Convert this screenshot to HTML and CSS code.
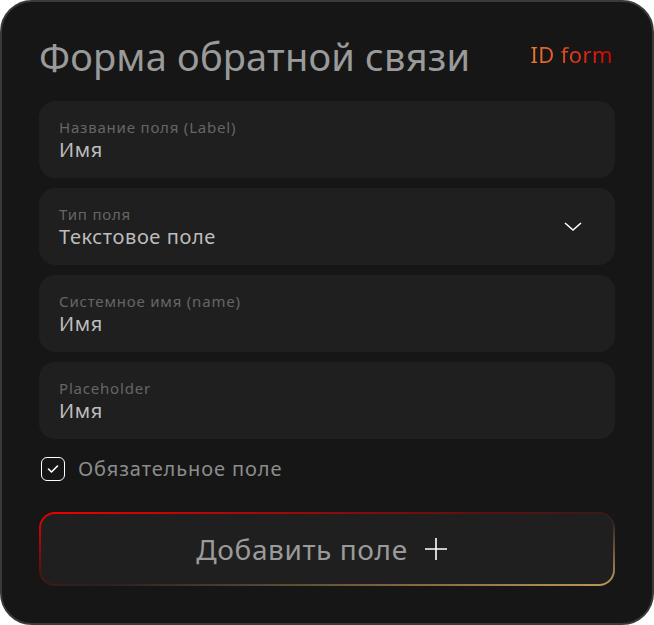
FILE: index.html
```html
<!DOCTYPE html>
<html lang="ru">
<head>
    <meta charset="UTF-8">
    <meta name="viewport" content="width=device-width, initial-scale=1.0">
    <title>Форма обратной связи</title>
    <link rel="stylesheet" href="styles.css">
</head>
<body>
    <div class="card">
        <div class="card-head">
            <h1>Форма обратной связи</h1>
            <span class="form-id">ID form</span>
        </div>

        <div class="field">
            <span class="field-label">Название поля (Label)</span>
            <span class="field-value">Имя</span>
        </div>
        <div class="field field-select">
            <div>
                <span class="field-label">Тип поля</span>
                <span class="field-value">Текстовое поле</span>
            </div>
            <svg class="chevron" width="20" height="12" viewBox="0 0 20 12">
                <path d="M2 2l8 7 8-7" fill="none" stroke="#fff" stroke-width="1.6"/>
            </svg>
        </div>
        <div class="field">
            <span class="field-label">Системное имя (name)</span>
            <span class="field-value">Имя</span>
        </div>
        <div class="field">
            <span class="field-label">Placeholder</span>
            <span class="field-value">Имя</span>
        </div>

        <label class="check">
            <span class="check-box">
                <svg width="12" height="10" viewBox="0 0 12 10">
                    <path d="M1.5 5l3 3 6-6" fill="none" stroke="#fff" stroke-width="1.6" stroke-linecap="round" stroke-linejoin="round"/>
                </svg>
            </span>
            Обязательное поле
        </label>

        <button class="add-button" type="button">
            Добавить поле
            <svg width="24" height="24" viewBox="0 0 24 24">
                <path d="M12 1v22M1 12h22" stroke="#fff" stroke-width="1.6"/>
            </svg>
        </button>
    </div>
</body>
</html>
```

FILE: styles.css
```css
body {
    margin: 0;
    background-color: #fff;
    font-family: "Noto Sans", sans-serif;
}
.card {
    box-sizing: border-box;
    width: 654px;
    height: 625px;
    padding: 27px 37px 0 37px;
    background-color: #161616;
    border: 2px solid #3a3a3a;
    border-radius: 32px;
}
.card-head {
    display: flex;
    justify-content: space-between;
    align-items: center;
    margin-bottom: 18px;
}
.card-head h1 {
    margin: 0;
    font-size: 38px;
    font-weight: 400;
    letter-spacing: 0.2px;
    color: #9a9a9a;
    line-height: 54px;
}
.form-id {
    font-size: 22px;
    letter-spacing: 0.4px;
    background: linear-gradient(90deg, #ea7c32, #d40000);
    -webkit-background-clip: text;
    background-clip: text;
    color: transparent;
    margin: 0 2px 4px 0;
}
.field {
    display: flex;
    flex-direction: column;
    justify-content: center;
    height: 77px;
    box-sizing: border-box;
    padding: 0 20px;
    margin-bottom: 10px;
    background-color: #1f1f1f;
    border-radius: 16px;
}
.field-select {
    flex-direction: row;
    align-items: center;
    justify-content: space-between;
    padding-right: 32px;
}
.field-select div {
    display: flex;
    flex-direction: column;
}
.field-label {
    font-size: 15px;
    letter-spacing: 0.8px;
    color: #666;
    line-height: 20px;
}
.field-value {
    font-size: 20px;
    letter-spacing: 0.6px;
    color: #bdbdbd;
    line-height: 26px;
}
.check {
    display: flex;
    align-items: center;
    gap: 13px;
    margin: 16px 0 30px 2px;
    font-size: 20px;
    letter-spacing: 0.9px;
    color: #8c8c8c;
}
.check-box {
    display: flex;
    align-items: center;
    justify-content: center;
    width: 24px;
    height: 24px;
    box-sizing: border-box;
    border: 1.5px solid #fff;
    border-radius: 6px;
}
.add-button {
    display: flex;
    align-items: center;
    justify-content: center;
    gap: 16px;
    width: 100%;
    height: 74px;
    padding: 0 10px 0 0;
    border: 2px solid transparent;
    border-radius: 16px;
    background:
        linear-gradient(#1f1f1f, #1f1f1f) padding-box,
        linear-gradient(to bottom right, #f00000 0%, #5a1010 40%, #2a2020 55%, #c09a5a 100%) border-box;
    font-family: inherit;
    font-size: 28px;
    letter-spacing: 0.6px;
    color: #9a9a9a;
    cursor: pointer;
}
```
